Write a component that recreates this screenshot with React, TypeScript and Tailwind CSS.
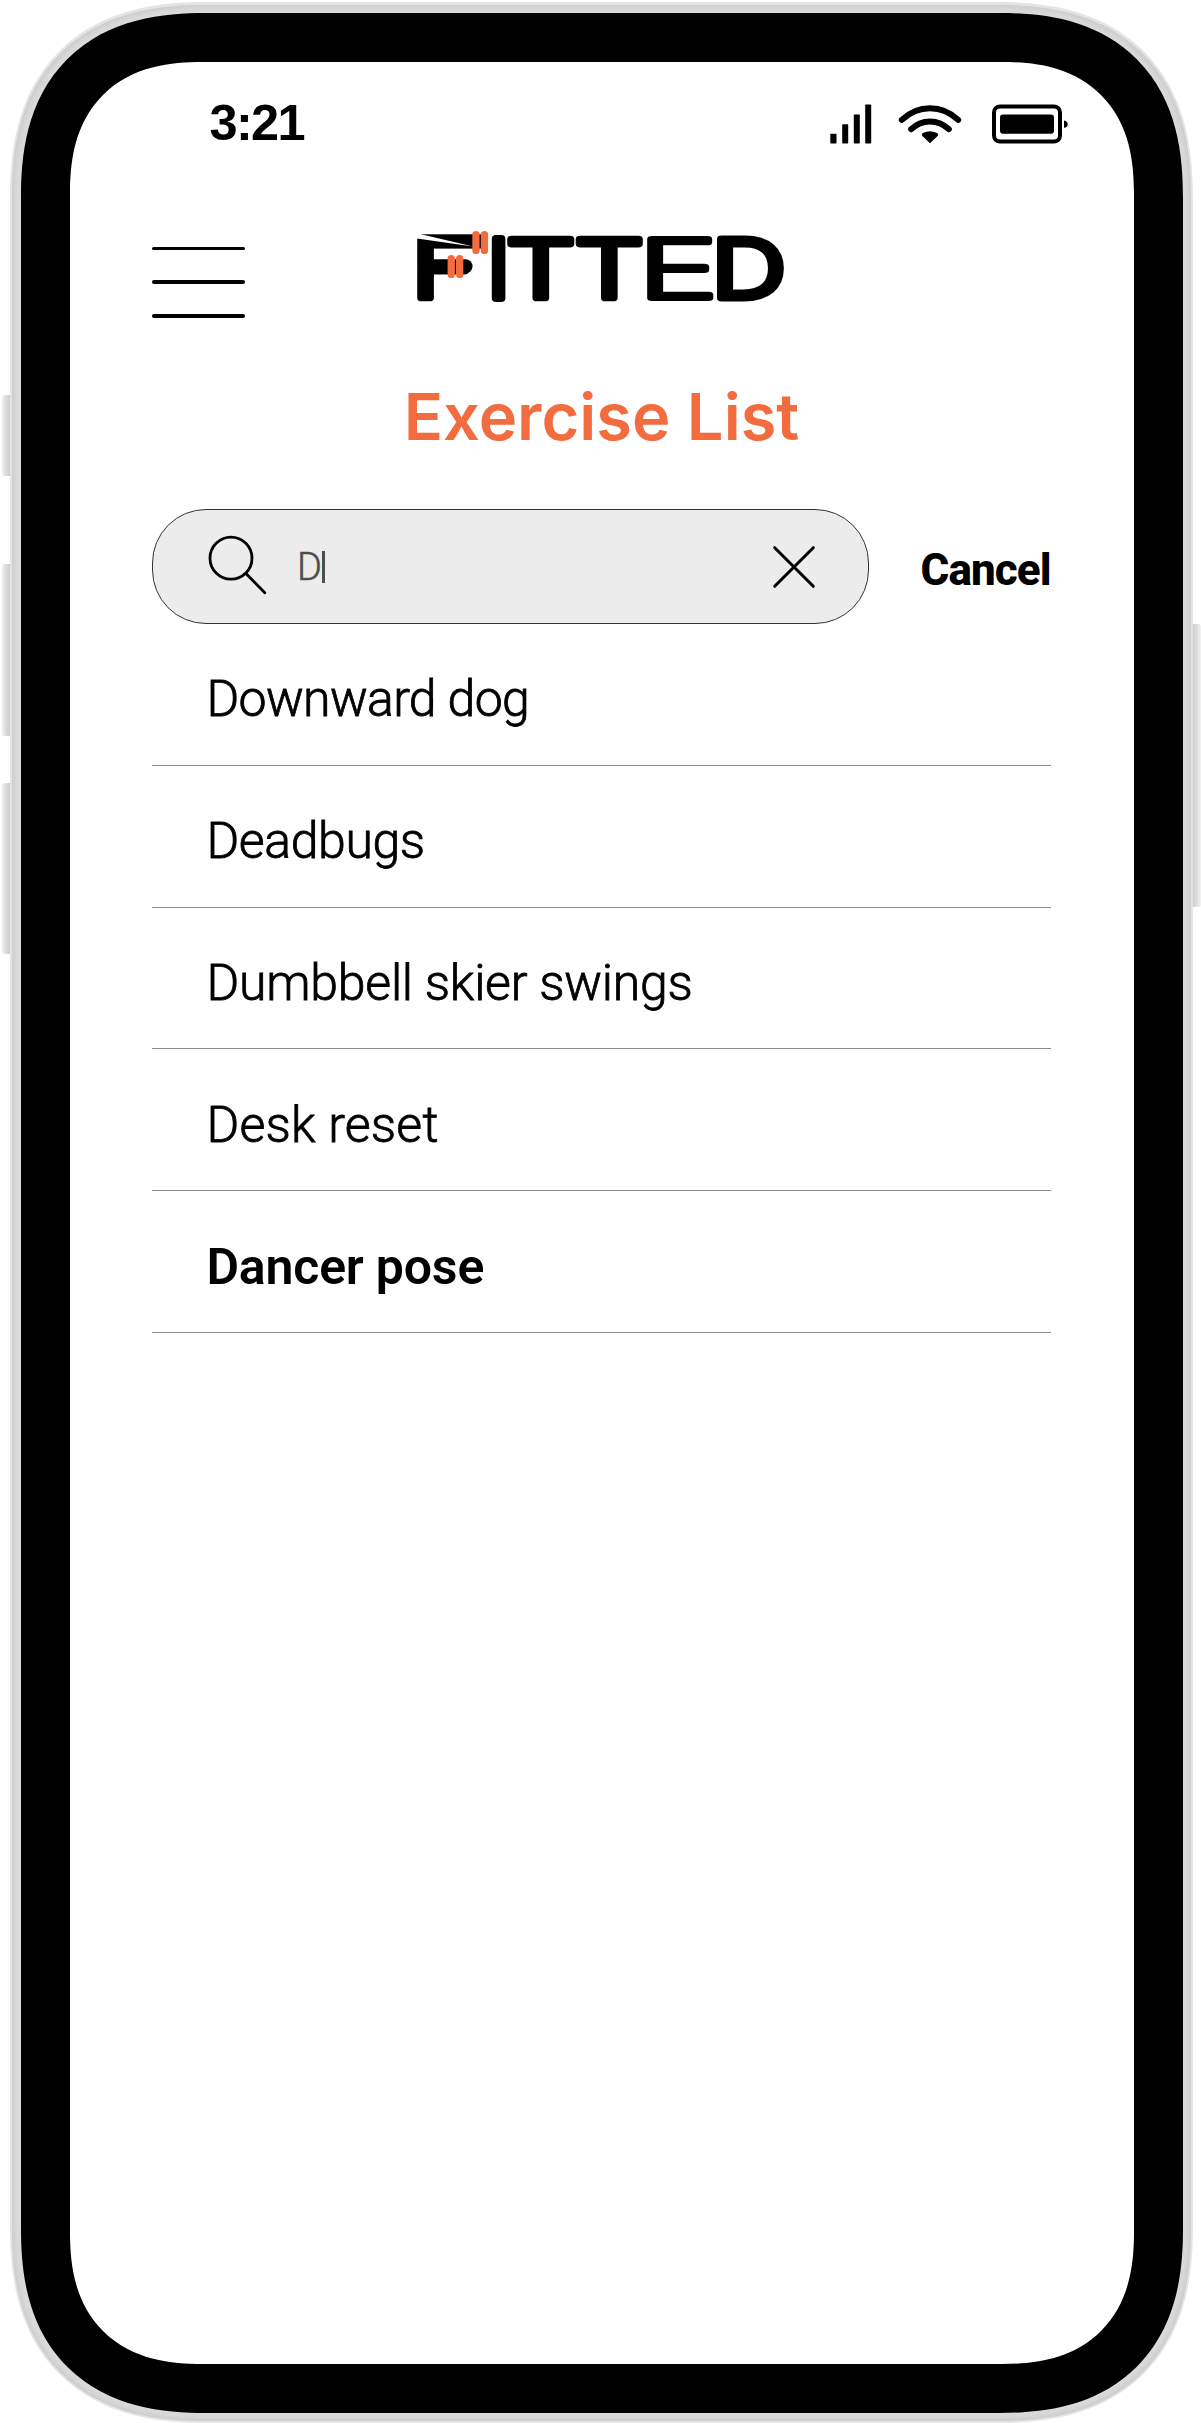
import type { ReactNode } from "react";

type Exercise = { name: string; className: string };

const exercises: Exercise[] = [
  { name: "Downward dog", className: "font-light tracking-[-0.65px] [-webkit-text-stroke:0.8px_#000]" },
  { name: "Deadbugs", className: "font-light tracking-[-0.4px] [-webkit-text-stroke:0.8px_#000]" },
  { name: "Dumbbell skier swings", className: "font-light tracking-[-0.25px] [-webkit-text-stroke:0.8px_#000]" },
  { name: "Desk reset", className: "font-light tracking-[0.2px] [-webkit-text-stroke:0.8px_#000]" },
  { name: "Dancer pose", className: "font-semibold tracking-[-0.2px]" },
];

function LogoLetter({ x, sx, weight, children }: { x: number; sx: number; weight: number; children: ReactNode }) {
  return (
    <text
      transform={`translate(${x} 297.5) scale(${sx} 1)`}
      fontFamily="Inter, sans-serif"
      fontSize="81"
      fontWeight={weight}
      fill="#000"
      stroke="#000"
      strokeWidth="8"
      strokeLinejoin="round"
      style={{ vectorEffect: "non-scaling-stroke" }}
    >
      {children}
    </text>
  );
}

function Logo() {
  return (
    <svg className="h-[82px] w-[380px] shrink-0 overflow-visible" viewBox="410 225 380 82" aria-label="FITTED">
      <LogoLetter x={411.2} sx={1.35} weight={300}>F</LogoLetter>
      <LogoLetter x={488} sx={1} weight={300}>I</LogoLetter>
      <LogoLetter x={505.9} sx={1.35} weight={300}>T</LogoLetter>
      <LogoLetter x={574.6} sx={1.35} weight={300}>T</LogoLetter>
      <LogoLetter x={637.7} sx={1.68} weight={200}>E</LogoLetter>
      <LogoLetter x={711.6} sx={1.28} weight={300}>D</LogoLetter>
      <rect x="421" y="234.3" width="64" height="14.3" />
      <rect x="425" y="259.3" width="47.5" height="14" rx="7" />
      <polygon points="412,229 421,234.3 473,246.6 417,238.6 412,238.6" fill="#fff" />
      <g fill="#f36c3f">
        <rect x="472.3" y="231" width="7.3" height="23" rx="3.6" />
        <rect x="480.8" y="231" width="7.3" height="23" rx="3.6" />
        <rect x="447.6" y="255" width="7.3" height="23" rx="3.6" />
        <rect x="456" y="255" width="7.3" height="23" rx="3.6" />
      </g>
    </svg>
  );
}

function StatusBar() {
  return (
    <div className="flex h-[108px] items-start justify-between pt-9 pr-[65px] pl-[140px]">
      <span className="font-['Liberation_Sans',sans-serif] text-[50.5px] leading-[50px] font-bold tracking-[-1.7px]">3:21</span>
      <div className="mt-[6px] flex items-center">
        <svg className="h-[40px] w-[42px]" viewBox="830 104.5 42 40">
          <rect x="830.3" y="134.3" width="6.2" height="9.7" rx="0.7" />
          <rect x="842.2" y="124.7" width="6" height="19.3" rx="0.7" />
          <rect x="853.8" y="115" width="6" height="29" rx="0.7" />
          <rect x="865.2" y="105" width="6" height="39" rx="0.7" />
        </svg>
        <svg className="ml-[26px] h-[40px] w-[64px]" viewBox="898 104.5 64 40" fill="none" stroke="#000" strokeWidth="6" strokeLinecap="round">
          <path d="M901.8 120.4Q914 108.7 930 108.7T958.2 120.4" />
          <path d="M911.2 129.7Q919 121.9 930 121.9T948.8 129.7" />
          <path d="M930 143.8L922.4 136.4Q921 134.3 923.6 133.2Q930 130.2 936.4 133.2Q939 134.3 937.6 136.4Z" fill="#000" stroke="none" />
        </svg>
        <svg className="ml-[29px] h-[40px] w-[78px]" viewBox="991 104.5 78 40">
          <rect x="994" y="107" width="66" height="35" rx="6" fill="none" stroke="#000" strokeWidth="4" />
          <rect x="1000" y="115" width="54" height="19.3" rx="3" />
          <path d="M1064 121Q1067.7 121.6 1067.7 124.7T1064 128.3Z" />
        </svg>
      </div>
    </div>
  );
}

function MenuButton() {
  return (
    <button aria-label="Menu" className="mt-[21.5px] flex w-[93.5px] shrink-0 flex-col gap-[30.4px]">
      <span className="h-[3.5px] rounded-full bg-black" />
      <span className="h-[3.5px] rounded-full bg-black" />
      <span className="h-[3.5px] rounded-full bg-black" />
    </button>
  );
}

function SearchRow() {
  return (
    <div className="flex h-[115px]">
      <div className="flex w-[717.5px] shrink-0 items-start rounded-[54px] border border-[#333] bg-[#ececec]">
        <svg className="mt-[24px] ml-[53px] h-[64px] w-[64px] shrink-0" viewBox="205.5 534 64 64" fill="none" stroke="#000" strokeWidth="2.8" strokeLinecap="round">
          <circle cx="230.5" cy="558.2" r="21" />
          <path d="M245.5 573.5L264.3 592.8" />
        </svg>
        <span className="mt-[32px] ml-[27.5px] flex h-[50px] items-start font-[Roboto,sans-serif] text-[38px] leading-[50px] font-light text-[#4d4d4d] [-webkit-text-stroke:0.5px_#4d4d4d]">
          D
          <span className="mt-[9px] ml-[0.5px] h-[32px] w-[2.5px] bg-[#4d4d4d]" />
        </span>
        <svg className="mt-[33.5px] mr-[51.5px] ml-auto h-[46px] w-[46px] shrink-0" viewBox="770.5 543.5 46 46" stroke="#000" strokeWidth="3" strokeLinecap="round">
          <path d="M774.2 547.2L812.8 585.8M812.8 547.2L774.2 585.8" />
        </svg>
      </div>
      <span className="mt-[35px] ml-[51.5px] font-[Roboto,sans-serif] text-[44px] leading-[52px] font-extrabold tracking-[-0.9px]">Cancel</span>
    </div>
  );
}

const sideButton = "absolute w-[8px]";
const leftFill = "bg-linear-to-r from-[#f0f0f0] via-[#dcdcdc] to-[#cccccc]";
const rightFill = "bg-linear-to-l from-[#f4f4f4] via-[#dedede] to-[#cfcfcf]";
const smooth = "[corner-shape:superellipse(1.27)]";

export default function App() {
  return (
    <div className="relative h-[2423px] w-[1201px] overflow-hidden bg-white pt-[2px] pl-[9.5px] text-black">
      <div className={`${sideButton} ${leftFill} top-[394.5px] left-[2px] h-[81px] rounded-l-[3px]`} />
      <div className={`${sideButton} ${leftFill} top-[564px] left-[2px] h-[172px] rounded-l-[3px]`} />
      <div className={`${sideButton} ${leftFill} top-[783px] left-[2px] h-[171px] rounded-l-[3px]`} />
      <div className={`${sideButton} ${rightFill} top-[624px] left-[1192.5px] h-[283px] rounded-r-[3px]`} />

      <div className={`h-[2421px] w-[1183.5px] rounded-[169px] bg-[#e4e4e4] p-[2.5px] supports-[corner-shape:squircle]:rounded-[197px] ${smooth}`}>
        <div className={`h-full rounded-[167px] bg-[#dadada] pt-[8.5px] pr-[8px] pb-[8px] pl-[8.5px] shadow-[inset_0_0_5px_2px_#cbcbcb] supports-[corner-shape:squircle]:rounded-[194px] ${smooth}`}>
          <div className={`h-full rounded-[159px] bg-black p-[49px] supports-[corner-shape:squircle]:rounded-[185px] ${smooth}`}>
            <div className={`flex h-full flex-col overflow-hidden rounded-[112px] bg-white supports-[corner-shape:squircle]:rounded-[132px] ${smooth}`}>
              <StatusBar />
              <div className="flex h-[207.5px] items-start pt-[55px] pl-[82px]">
                <MenuButton />
                <div className="ml-[165px]"><Logo /></div>
              </div>
              <h1 className="h-[131.5px] text-center font-[Inter,sans-serif] text-[65px] leading-[78px] font-semibold text-[#f36c3f]">Exercise List</h1>
              <div className="w-[981.5px] pl-[82px]">
                <SearchRow />
                <ul>
                  {exercises.map((item) => (
                    <li key={item.name} className="flex h-[141.8px] items-end border-b border-[#8a8a8a] pb-[35.4px] pl-[55px]">
                      <span className={`font-[Roboto,sans-serif] text-[50px] leading-[60px] whitespace-nowrap ${item.className}`}>{item.name}</span>
                    </li>
                  ))}
                </ul>
              </div>
            </div>
          </div>
        </div>
      </div>
    </div>
  );
}
